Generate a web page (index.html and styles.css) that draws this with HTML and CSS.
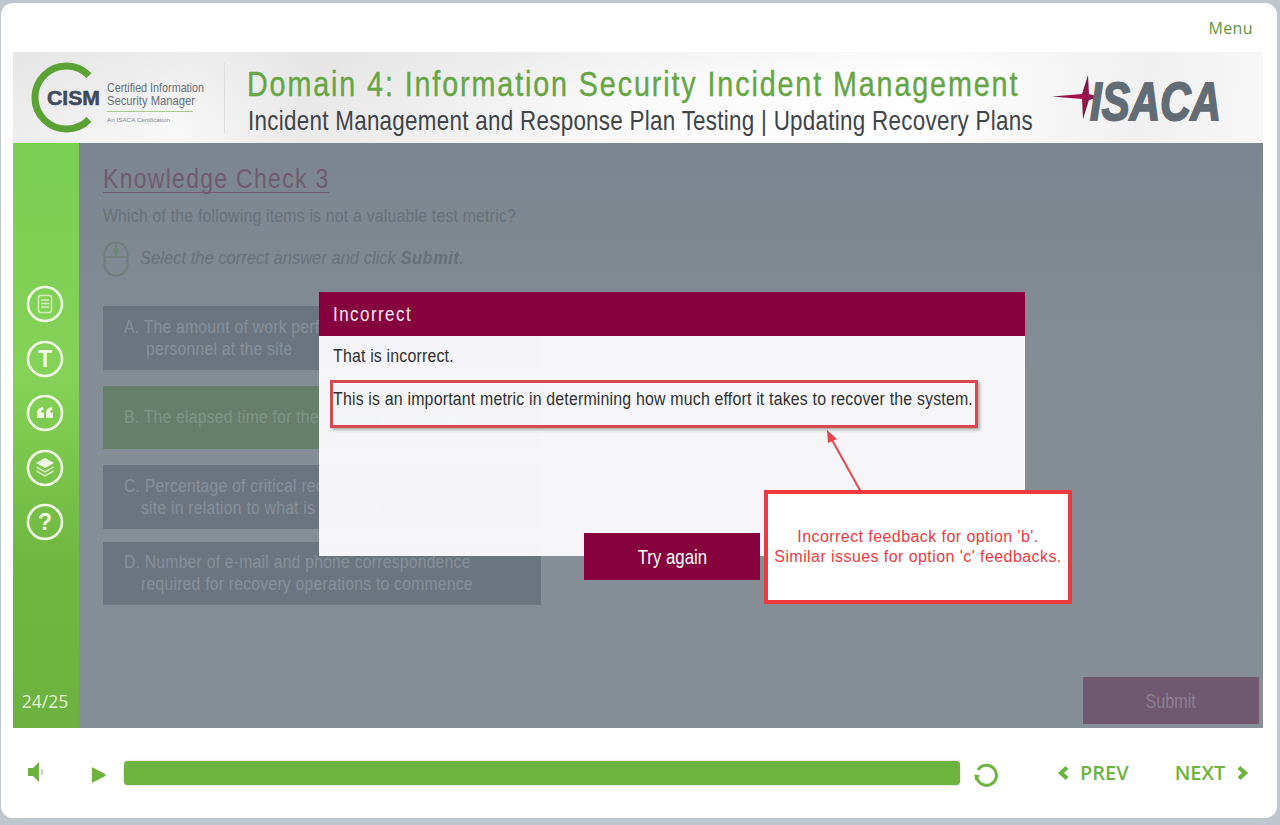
FILE: index.html
```html
<!DOCTYPE html>
<html lang="en">

<head>
  <meta charset="UTF-8">
  <title>Knowledge Check 3</title>
  <link rel="stylesheet" href="styles.css">
</head>

<body>
  <div class="card">
    <div class="menu-row"><a class="menu">Menu</a></div>

    <!-- Course banner -->
    <header class="banner">
      <svg class="cism" width="180" height="72" viewBox="0 0 180 72">
        <path d="M58 13.5 A31.5 31.5 0 1 0 58 57.5" fill="none" stroke="#5ba235" stroke-width="7"/>
        <text x="16" y="43" class="cism-mark" textLength="53" lengthAdjust="spacingAndGlyphs">CISM</text>
        <text x="76" y="29.5" class="cism-line" textLength="97" lengthAdjust="spacingAndGlyphs">Certified Information</text>
        <text x="76" y="42.5" class="cism-line" textLength="88" lengthAdjust="spacingAndGlyphs">Security Manager</text>
        <path d="M76 49.5 H162" stroke="#a8c98f" stroke-width="1"/>
        <text x="76" y="60" class="cism-small" textLength="63" lengthAdjust="spacingAndGlyphs">An ISACA Certification</text>
      </svg>
      <div class="banner-rule"></div>
      <div class="titles">
        <h1>Domain 4: Information Security Incident Management</h1>
        <h2>Incident Management and Response Plan Testing | Updating Recovery Plans</h2>
      </div>
      <svg class="isaca" width="172" height="52" viewBox="0 0 172 52">
        <defs>
          <radialGradient id="star">
            <stop offset="0" stop-color="#b0104e"/>
            <stop offset="1" stop-color="#6e1a40"/>
          </radialGradient>
        </defs>
        <path d="M-1 26.5 L29 24 L35 5 L36 24 L47 27 L36 30 L30 49 L29 29 Z" fill="url(#star)"/>
        <text x="37" y="49.5" class="isaca-mark" textLength="131" lengthAdjust="spacingAndGlyphs">ISACA</text>
      </svg>
    </header>

    <div class="main">
      <!-- Green side rail -->
      <nav class="rail">
        <div class="rail-icons">
          <svg class="rail-icon" viewBox="0 0 38 38">
            <circle cx="19" cy="19" r="17" />
            <rect x="12.5" y="10.5" width="13" height="17" rx="2" class="thin"/>
            <path d="M15 15 H23 M15 18.5 H23 M15 22 H23" class="thin"/>
          </svg>
          <svg class="rail-icon" viewBox="0 0 38 38">
            <circle cx="19" cy="19" r="17" />
            <text x="19" y="27" class="glyph">T</text>
          </svg>
          <svg class="rail-icon" viewBox="0 0 38 38">
            <circle cx="19" cy="19" r="17" />
            <path class="solid" d="M11 24 V19 Q11 14 17 13 L17.5 15.5 Q15 16 15 18.5 H18 V24 Z M20 24 V19 Q20 14 26 13 L26.5 15.5 Q24 16 24 18.5 H27 V24 Z"/>
          </svg>
          <svg class="rail-icon" viewBox="0 0 38 38">
            <circle cx="19" cy="19" r="17" />
            <path class="solid" d="M19 9 L28 14 L19 19 L10 14 Z"/>
            <path class="thin" d="M10.5 18 L19 23 L27.5 18 M10.5 22 L19 27 L27.5 22"/>
          </svg>
          <svg class="rail-icon" viewBox="0 0 38 38">
            <circle cx="19" cy="19" r="17" />
            <text x="19" y="27" class="glyph">?</text>
          </svg>
        </div>
        <div class="page-count">24/25</div>
      </nav>

      <!-- Question, dimmed behind the dialog -->
      <section class="stage">
        <h3 class="check-title">Knowledge Check 3</h3>
        <p class="question">Which of the following items is not a valuable test metric?</p>
        <div class="instruction">
          <svg width="26" height="36" viewBox="0 0 26 36">
            <rect x="1.5" y="1.5" width="23" height="33" rx="11" fill="none" stroke="#6c7f7a" stroke-width="2"/>
            <path d="M1.5 16 H24.5 M13 1.5 V16" stroke="#6c7f7a" stroke-width="1.5"/>
            <rect x="10.5" y="6" width="5" height="8" rx="2.5" fill="#6e8672"/>
          </svg>
          <span class="instruction-text">Select the correct answer and click <b>Submit</b>.</span>
        </div>

        <div class="options">
          <div class="option">
            <span>A. The amount of work performed by recovery</span>
            <span class="indent-a">personnel at the site</span>
          </div>
          <div class="option option-picked">
            <span>B. The elapsed time for the recovery to complete</span>
          </div>
          <div class="option">
            <span>C. Percentage of critical records recovered at the remote</span>
            <span class="indent-c">site in relation to what is required</span>
          </div>
          <div class="option option-last">
            <span>D. Number of e-mail and phone correspondence</span>
            <span class="indent-c">required for recovery operations to commence</span>
          </div>
        </div>

        <div class="submit-row"><button class="submit"><span>Submit</span></button></div>

        <!-- Feedback dialog -->
        <div class="dialog">
          <div class="dialog-head"><span>Incorrect</span></div>
          <div class="dialog-body">
            <p>That is incorrect.</p>
            <p>This is an important metric in determining how much effort it takes to recover the system.</p>
          </div>
          <button class="try-again"><span>Try again</span></button>
        </div>

        <!-- Review annotation -->
        <div class="mark-box"></div>
        <svg class="mark-arrow" width="50" height="70" viewBox="0 0 50 70">
          <path d="M41 66 L11 12" stroke="#e0484e" stroke-width="2"/>
          <path d="M7 4 L17 13 L8 17 Z" fill="#e0484e"/>
        </svg>
        <div class="callout">Incorrect feedback for option 'b'.<br>Similar issues for option 'c' feedbacks.</div>
      </section>
    </div>

    <!-- Player controls -->
    <footer class="controls">
      <svg class="speaker" width="18" height="22" viewBox="0 0 18 22">
        <path d="M1 7 H6 L12 1 V21 L6 15 H1 Z" fill="#6db33f"/>
        <path d="M15 8 V14" stroke="#a9d48c" stroke-width="1.5"/>
      </svg>
      <svg class="play" width="16" height="18" viewBox="0 0 18 20">
        <path d="M1 2 Q1 1 2 1.5 L16 9 Q17 10 16 11 L2 18.5 Q1 19 1 18 Z" fill="#6db33f"/>
      </svg>
      <div class="progress"></div>
      <svg class="reload" width="26" height="26" viewBox="0 0 26 26">
        <path d="M5 8 A10 10 0 1 1 3.5 14" fill="none" stroke="#6db33f" stroke-width="3"/>
        <path d="M1 13 L7 13 L3 19 Z" fill="#6db33f" transform="rotate(10 4 15)"/>
      </svg>
      <a class="nav-btn prev">
        <svg width="12" height="14" viewBox="0 0 12 14"><path d="M10 1.5 L4 7 L10 12.5" fill="none" stroke="#6db33f" stroke-width="4.2"/></svg>
        PREV
      </a>
      <a class="nav-btn next">
        NEXT
        <svg width="12" height="14" viewBox="0 0 12 14"><path d="M2 1.5 L8 7 L2 12.5" fill="none" stroke="#6db33f" stroke-width="4.2"/></svg>
      </a>
    </footer>
  </div>
</body>

</html>
```

FILE: styles.css
```css
* {
  box-sizing: border-box;
}

body {
  margin: 0;
  height: 825px;
  padding: 3px 3px 7px 1px;
  background: #c0c6cd;
  overflow: hidden;
  font-family: "Liberation Sans", sans-serif;
}

.card {
  height: 815px;
  padding: 0 14px 0 12px;
  background: #fff;
  border-radius: 12px;
  display: flex;
  flex-direction: column;
}

.menu-row {
  height: 49px;
  padding: 14px 10px 0 0;
  text-align: right;
}

.menu {
  font-family: "Open Sans", sans-serif;
  font-size: 16px;
  letter-spacing: 0.4px;
  color: #5b9440;
}

/* banner */
.banner {
  height: 91px;
  display: flex;
  align-items: center;
  background:
    linear-gradient(176deg, rgba(224, 224, 224, 0.55), rgba(255, 255, 255, 0) 50%),
    linear-gradient(100deg, #ededed 0%, #f8f8f8 14%, #e9e9e9 24%, #fafafa 50%, #ffffff 72%, #f0f0f0 90%, #f8f8f8 100%);
}

.cism {
  margin: 0 0 0 18px;
  flex: none;
  overflow: visible;
}

.cism-mark {
  font: bold 20px "Liberation Sans", sans-serif;
  fill: #3c4a5c;
  stroke: #3c4a5c;
  stroke-width: 0.5;
}

.cism-line {
  font: 13px "Liberation Sans", sans-serif;
  fill: #67707a;
}

.cism-small {
  font: 6px "Liberation Sans", sans-serif;
  fill: #858b92;
}

.banner-rule {
  width: 1px;
  height: 70px;
  margin: 0 22px 0 13px;
  background: #dcdcdc;
}

.titles {
  flex: none;
  width: 790px;
  margin-top: 8px;
}

.titles h1,
.titles h2 {
  font-weight: normal;
  white-space: nowrap;
  transform-origin: left center;
}

.titles h1 {
  margin: 0;
  font-size: 35px;
  line-height: 38px;
  letter-spacing: 2.3px;
  color: #66a544;
  -webkit-text-stroke: 0.4px #66a544;
  transform: scaleX(0.82);
}

.titles h2 {
  margin: 0 0 0 1px;
  font-size: 28px;
  line-height: 36px;
  letter-spacing: 0.35px;
  color: #3f4448;
  transform: scaleX(0.8);
}

.isaca {
  margin: 2px 0 6px 16px;
  flex: none;
  overflow: visible;
}

.isaca-mark {
  font: italic bold 54px "Liberation Sans", sans-serif;
  fill: #626c74;
  stroke: #626c74;
  stroke-width: 2;
}

/* main area */
.main {
  height: 585px;
  display: flex;
}

.rail {
  width: 66px;
  flex: none;
  padding: 142px 2px 15px 0;
  display: flex;
  flex-direction: column;
  justify-content: space-between;
  align-items: center;
  background: linear-gradient(180deg, #7dce55 0%, #84d257 40%, #70b842 70%, #6cb13f 100%);
}

.rail-icons {
  display: flex;
  flex-direction: column;
  gap: 16.5px;
}

.rail-icon {
  display: block;
  width: 38px;
  height: 38px;
}

.rail-icon circle {
  fill: none;
  stroke: #f0f8e6;
  stroke-width: 2.6;
}

.rail-icon .thin {
  fill: none;
  stroke: #d4edbd;
  stroke-width: 1.5;
}

.rail-icon .solid {
  fill: #f0f8e6;
}

.rail-icon .glyph {
  font: bold 23px "Liberation Sans", sans-serif;
  fill: #f0f8e6;
  text-anchor: middle;
}

.page-count {
  font-family: "Open Sans", sans-serif;
  font-size: 17.5px;
  line-height: 24px;
  color: #e3f2d4;
}

.stage {
  position: relative;
  flex: 1;
  padding: 23px 4px 4px 24px;
  display: flex;
  flex-direction: column;
  background: linear-gradient(180deg, #7c8690 0%, #848c94 40%, #878f96 100%);
}

.check-title {
  align-self: flex-start;
  margin: 0 0 12px;
  font-size: 28px;
  line-height: 26px;
  font-weight: normal;
  letter-spacing: 1.6px;
  color: #6f5b70;
  border-bottom: 1px solid #6f5b70;
  transform: scaleX(0.82);
  transform-origin: left center;
}

.question {
  margin: 0 0 14px;
  font-size: 18px;
  line-height: 22px;
  letter-spacing: 0.25px;
  white-space: nowrap;
  color: #687079;
  transform: scaleX(0.877);
  transform-origin: left center;
}

.instruction {
  display: flex;
  align-items: center;
  gap: 11px;
  height: 36px;
  font-size: 18px;
  font-style: italic;
  color: #687079;
}

.instruction-text {
  margin-bottom: 2px;
  white-space: nowrap;
  transform: scaleX(0.92);
  transform-origin: left center;
}

.instruction-text b {
  letter-spacing: 0.5px;
}

.options {
  width: 438px;
  margin-top: 29px;
  display: flex;
  flex-direction: column;
  gap: 16px;
}

.option {
  height: 63.5px;
  padding-left: 21px;
  display: flex;
  flex-direction: column;
  justify-content: center;
  font-size: 18px;
  line-height: 22px;
  letter-spacing: 0.3px;
  color: #87909a;
  background: #6b7580;
}

.option span {
  align-self: flex-start;
  white-space: nowrap;
  transform: scaleX(0.87);
  transform-origin: left center;
}

.option-picked {
  background: #667f6c;
  color: #7e9488;
}

.option-last {
  margin-top: -3px;
}

.option .indent-a {
  margin-left: 22px;
}

.option .indent-c {
  margin-left: 17px;
}

.submit-row {
  margin-top: auto;
  display: flex;
  justify-content: flex-end;
}

.submit {
  width: 176px;
  height: 47px;
  border: 0;
  font-family: inherit;
  font-size: 21px;
  color: #8b8092;
  background: #6f5870;
}

.submit span,
.try-again span,
.dialog-head span {
  display: inline-block;
}

.submit span {
  transform: scaleX(0.77);
}

/* dialog */
.dialog {
  position: absolute;
  left: 240px;
  top: 149px;
  width: 706px;
  height: 264px;
  background: rgba(248, 248, 251, 0.98);
}

.dialog-head {
  height: 44px;
  padding-left: 14px;
  font-size: 20px;
  line-height: 44px;
  letter-spacing: 1.7px;
  color: #f8ecf2;
  background: #85003c;
}

.dialog-head span {
  transform: scaleX(0.85);
  transform-origin: left center;
}

.dialog-body {
  padding: 9px 14px;
  font-size: 18px;
  line-height: 22px;
  letter-spacing: 0.2px;
  color: #2f3033;
}

.dialog-body p {
  margin: 0 0 21px;
  white-space: nowrap;
  transform: scaleX(0.884);
  transform-origin: left center;
}

.try-again {
  position: absolute;
  left: 265px;
  top: 241px;
  width: 176px;
  height: 47px;
  border: 0;
  font-family: inherit;
  font-size: 21px;
  color: #fff;
  background: #85003c;
}

.try-again span {
  transform: scaleX(0.8);
}

/* annotation */
.mark-box {
  position: absolute;
  left: 251px;
  top: 237px;
  width: 648px;
  height: 48px;
  border: 3px solid #d8484f;
  box-shadow: 2px 2px 3px rgba(0, 0, 0, 0.3);
}

.mark-arrow {
  position: absolute;
  left: 741px;
  top: 283px;
}

.callout {
  position: absolute;
  left: 685px;
  top: 347px;
  width: 308px;
  height: 114px;
  border: 4px solid #ee3a3e;
  display: flex;
  align-items: center;
  justify-content: center;
  text-align: center;
  font-family: "Liberation Sans", sans-serif;
  font-size: 16px;
  line-height: 20px;
  letter-spacing: 0.43px;
  color: #ee3a3e;
  background: #fff;
}

/* player controls */
.controls {
  height: 90px;
  padding: 0 10px 0 14px;
  display: flex;
  align-items: center;
}

.speaker {
  margin-bottom: 2px;
}

.play {
  margin: 3px 2px 0 46px;
}

.progress {
  width: 836px;
  height: 24px;
  margin: 0 0 0 15px;
  border-radius: 4px;
  background: #6db33f;
  box-shadow: 0 0 2px rgba(0, 0, 0, 0.3);
}

.reload {
  margin: 3px 0 0 13px;
}

.nav-btn {
  display: flex;
  align-items: center;
  gap: 11px;
  margin-bottom: 1px;
  font-family: "Open Sans", sans-serif;
  font-size: 20px;
  font-weight: 600;
  color: #6db33f;
}

.prev {
  margin-left: 58px;
}

.next {
  gap: 12px;
  margin-left: 46px;
}
```
